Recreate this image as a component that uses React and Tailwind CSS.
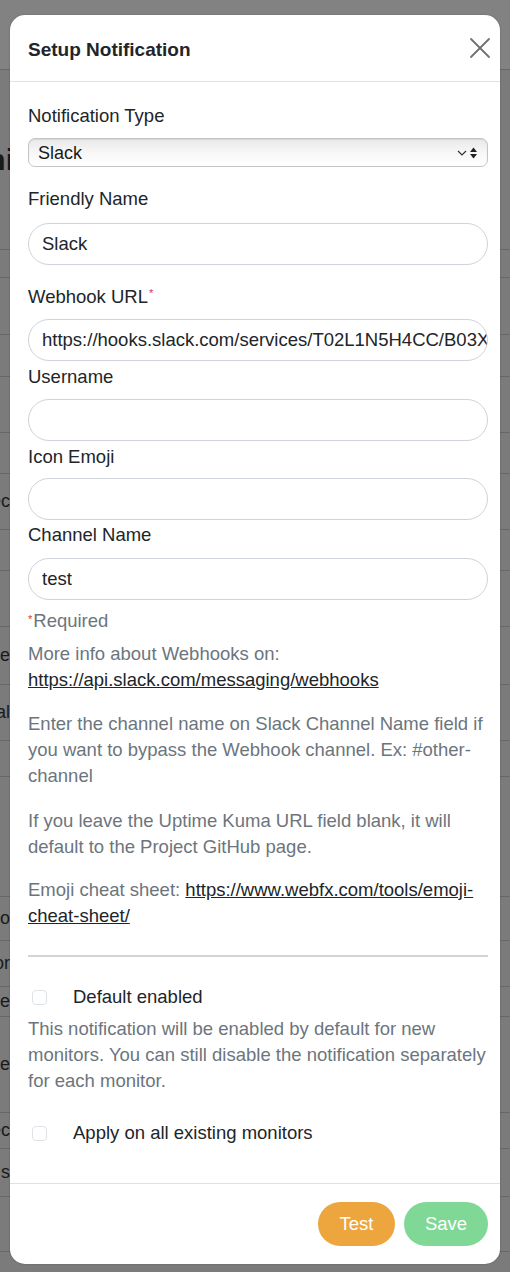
import React from "react";

const bgRows = [
  { h: 70, t: "", top: true },
  { h: 180, t: "ni", big: true },
  { h: 28, t: "" },
  { h: 57, t: "" },
  { h: 42, t: "" },
  { h: 56, t: "" },
  { h: 41, t: "" },
  { h: 56, t: "ec" },
  { h: 41, t: "" },
  { h: 56, t: "" },
  { h: 58, t: "e" },
  { h: 56, t: "al" },
  { h: 36, t: "" },
  { h: 120, t: "" },
  { h: 44, t: "o" },
  { h: 46, t: "or" },
  { h: 30, t: "e" },
  { h: 96, t: "de" },
  { h: 36, t: "ec" },
  { h: 48, t: "s" },
  { h: 55, t: "" },
];

function Background() {
  return (
    <div className="flex flex-col w-[510px] h-[1272px] bg-[#7b7b7b] overflow-hidden">
      {bgRows.map((r, i) => (
        <div
          key={i}
          style={{ height: r.h }}
          className={`flex items-center border-b border-[#676767] ${r.top ? "bg-[#828282]" : ""}`}
        >
          <div
            className={`${r.big ? "w-[14px]" : "w-[10px]"} flex justify-end overflow-hidden whitespace-nowrap`}
          >
            <span
              className={`${r.big ? "text-[30px] font-bold" : "text-[18px]"} text-[#1a1a1a]`}
            >
              {r.t}
            </span>
          </div>
        </div>
      ))}
    </div>
  );
}

function Label({ children, className = "", req }) {
  return (
    <div className={`text-[18.5px] leading-[26px] text-[#212529] ${className}`}>
      {children}
      {req && <sup className="text-[#dc3545] text-[11px] relative top-[-6px] ml-[1px]">*</sup>}
    </div>
  );
}

function Input({ value, className = "" }) {
  return (
    <div
      className={`h-[42px] rounded-full border-[1.5px] border-[#ced4da] bg-white flex items-center px-[13px] overflow-hidden whitespace-nowrap text-[18.5px] text-[#212529] ${className}`}
    >
      {value}
    </div>
  );
}

function Checkbox() {
  return (
    <div className="w-[15px] h-[15px] rounded-[4px] border border-[#dee2e6] bg-white shrink-0" />
  );
}

export default function App() {
  return (
    <div
      className="relative w-[510px] h-[1272px] overflow-hidden"
      style={{ fontFamily: '"Liberation Sans", Arial, Helvetica, sans-serif' }}
    >
      <Background />
      <div className="absolute left-[10px] top-[15px] w-[490px] h-[1249px] bg-white rounded-[15px] flex flex-col overflow-hidden shadow-[0_0_2px_rgba(0,0,0,0.25)]">
        {/* Header */}
        <div className="h-[67px] shrink-0 border-b border-[#dee2e6] flex items-center justify-between pl-[18px] pr-[10px]">
          <div className="text-[19px] font-bold text-[#212529] leading-none mt-[3px]">Setup Notification</div>
          <svg width="22" height="22" viewBox="0 0 22 22" className="ml-auto mr-[-1px]">
            <path d="M2 2 L20 20 M20 2 L2 20" stroke="#707070" strokeWidth="1.8" strokeLinecap="round" />
          </svg>
        </div>

        {/* Body */}
        <div className="flex-1 pl-[18px] pr-[12px] pt-[21px] flex flex-col">
          <Label className="mb-[9px]">Notification Type</Label>
          <div className="h-[29px] rounded-[7px] border border-[#c4c4c4] bg-gradient-to-b from-[#e9e9e9] via-[#f7f7f7] to-[#ffffff] shadow-[inset_0_1px_1px_rgba(0,0,0,0.08)] flex items-center justify-between pl-[9px] pr-[6px] mb-[19px]">
            <span className="text-[18px] text-[#1a1a1a] mt-[1px]">Slack</span>
            <svg width="24" height="16" viewBox="0 0 24 16">
              <path d="M1 6 L5 10 L9 6" stroke="#333" strokeWidth="1.2" fill="none" />
              <path d="M13 7 L16.5 2.5 L20 7 Z" fill="#222" />
              <path d="M13 9 L16.5 13.5 L20 9 Z" fill="#222" />
            </svg>
          </div>

          <Label className="mb-[11px]">Friendly Name</Label>
          <Input value="Slack" className="mb-[19px]" />

          <Label req className="mb-[9px]">Webhook URL</Label>
          <Input value="https://hooks.slack.com/services/T02L1N5H4CC/B03XYZ" className="mb-[3px]" />

          <Label className="mb-[9px]">Username</Label>
          <Input value="" className="mb-[3px]" />

          <Label className="mb-[8px]">Icon Emoji</Label>
          <Input value="" className="mb-[2px]" />

          <Label className="mb-[10px]">Channel Name</Label>
          <Input value="test" className="mb-[8px]" />

          <div className="text-[18.5px] leading-[26px] text-[#6c757d] mb-[7px]">
            <sup className="text-[#dc3545] text-[11px] relative top-[-4px] mr-[1px]">*</sup>Required
          </div>

          <div className="text-[18.5px] leading-[26px] text-[#6c757d] mb-[18px]">
            More info about Webhooks on:{" "}
            <span className="text-[#212529] underline">https://api.slack.com/messaging/webhooks</span>
          </div>

          <div className="text-[18.5px] leading-[26px] text-[#6c757d] mb-[19px]">
            Enter the channel name on Slack Channel Name field if you want to bypass the Webhook channel. Ex: #other-channel
          </div>

          <div className="text-[18.5px] leading-[26px] text-[#6c757d] mb-[17px]">
            If you leave the Uptime Kuma URL field blank, it will default to the Project GitHub page.
          </div>

          <div className="text-[18.5px] leading-[26px] text-[#6c757d]">
            Emoji cheat sheet:{" "}
            <span className="text-[#212529] underline">https://www.webfx.com/tools/emoji-cheat-sheet/</span>
          </div>

          <div className="h-[2px] bg-[#d4d4d4] mt-[26px] mb-[27px]" />

          <div className="flex items-center">
            <div className="ml-[4px] mr-[26px] flex items-center">
              <Checkbox />
            </div>
            <span className="text-[18.5px] leading-[26px] text-[#212529]">Default enabled</span>
          </div>
          <div className="text-[18.5px] leading-[26px] text-[#6c757d] mt-[6px]">
            This notification will be enabled by default for new monitors. You can still disable the notification separately for each monitor.
          </div>

          <div className="flex items-center mt-[26px]">
            <div className="ml-[4px] mr-[26px] flex items-center">
              <Checkbox />
            </div>
            <span className="text-[18.5px] leading-[26px] text-[#212529]">Apply on all existing monitors</span>
          </div>
        </div>

        {/* Footer */}
        <div className="h-[81px] shrink-0 border-t border-[#dee2e6] flex items-start justify-end pr-[12px] pt-[18px] gap-[9px]">
          <div className="w-[77px] h-[44px] rounded-full bg-[#eda53d] text-white text-[18.5px] flex items-center justify-center">
            Test
          </div>
          <div className="w-[84px] h-[44px] rounded-full bg-[#80d896] text-white text-[18.5px] flex items-center justify-center">
            Save
          </div>
        </div>
      </div>
    </div>
  );
}
